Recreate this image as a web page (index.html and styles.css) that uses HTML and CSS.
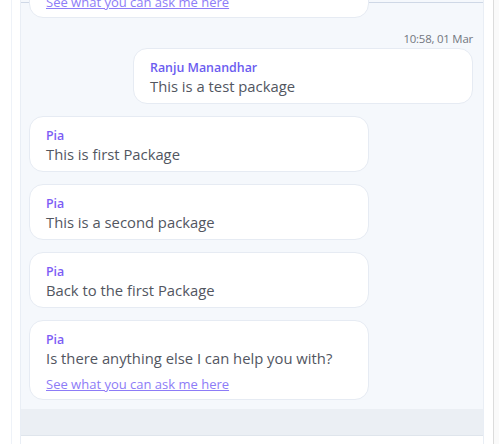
FILE: index.html
```html
<!DOCTYPE html>
<html lang="en">
<head>
<meta charset="utf-8">
<title>Chat</title>
<link rel="stylesheet" href="styles.css">
</head>
<body>
<div class="page">
  <div class="gutter"></div>
  <div class="chat">
    <div class="messages">
      <div class="bubble bot">
        <div class="name">Pia</div>
        <div class="text">Is there anything else I can help you with?</div>
        <a class="link" href="#">See what you can ask me here</a>
      </div>
      <div class="time">10:58, 01 Mar</div>
      <div class="bubble user">
        <div class="name">Ranju Manandhar</div>
        <div class="text">This is a test package</div>
      </div>
      <div class="bubble bot">
        <div class="name">Pia</div>
        <div class="text">This is first Package</div>
      </div>
      <div class="bubble bot">
        <div class="name">Pia</div>
        <div class="text">This is a second package</div>
      </div>
      <div class="bubble bot">
        <div class="name">Pia</div>
        <div class="text">Back to the first Package</div>
      </div>
      <div class="bubble bot">
        <div class="name">Pia</div>
        <div class="text">Is there anything else I can help you with?</div>
        <a class="link" href="#">See what you can ask me here</a>
      </div>
    </div>
    <div class="band"></div>
    <div class="composer"></div>
  </div>
  <div class="side-gap"></div>
  <div class="scrollbar"></div>
</div>
</body>
</html>
```

FILE: styles.css
```css
html, body {
  margin: 0;
  padding: 0;
  background: #ffffff;
}
body {
  font-family: "Open Sans", "Noto Sans", sans-serif;
  color: #4b4f58;
}
.page {
  display: flex;
  height: 444px;
  overflow: hidden;
}
.gutter {
  width: 11px;
  margin-right: 8px;
  border-right: 1px solid #eef2f8;
  flex: none;
}
.chat {
  width: 462px;
  flex: none;
  display: flex;
  flex-direction: column;
  border-left: 1px solid #e9eef5;
  border-right: 1px solid #e9eef5;
}
.messages {
  height: 409px;
  flex: none;
  overflow: hidden;
  display: flex;
  flex-direction: column;
  justify-content: flex-end;
  padding: 0 10px 9px 8px;
  box-sizing: border-box;
  background-color: #f5f8fc;
  background-image: linear-gradient(#cfd8e6, #cfd8e6);
  background-size: 100% 1px;
  background-position: 0 2px;
  background-repeat: no-repeat;
}
.bubble {
  width: 340px;
  box-sizing: border-box;
  flex: none;
  background: #ffffff;
  border: 1px solid #e6ebf3;
  border-radius: 14px;
  padding: 10px 16px 6px;
  margin-top: 12px;
}
.bubble.user {
  align-self: flex-end;
  margin-top: 1px;
}
.time {
  align-self: flex-end;
  font-size: 11.4px;
  line-height: 16px;
  color: #72767e;
  margin-top: 13px;
  letter-spacing: -0.2px;
}
.name {
  font-size: 12.4px;
  line-height: 17px;
  font-weight: 600;
  color: #7c5cf5;
}
.bubble.user .name {
  color: #6b5cf0;
}
.text {
  font-size: 14.8px;
  line-height: 21px;
  color: #52565f;
}
.link {
  display: block;
  margin-top: 6px;
  font-size: 13px;
  line-height: 18px;
  color: #8d7cf7;
  text-decoration: underline;
}
.band {
  height: 26px;
  flex: none;
  background: #ebeff4;
  border-bottom: 1px solid #dfe5ec;
}
.composer {
  flex: 1;
  background: #ffffff;
}
.side-gap {
  width: 9px;
  flex: none;
}
.scrollbar {
  flex: 1;
  border-left: 1px solid #dcdcdc;
  background: #fafafa;
}
```
